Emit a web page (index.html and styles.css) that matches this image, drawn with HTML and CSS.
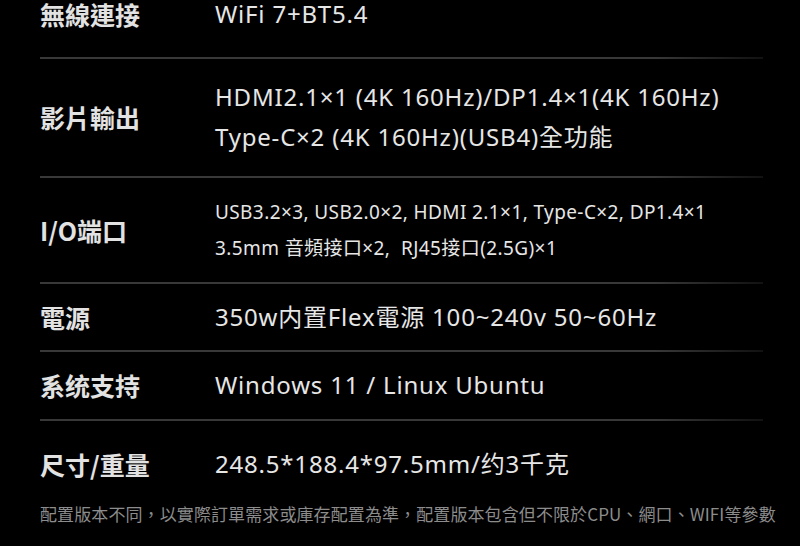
FILE: index.html
```html
<!DOCTYPE html>
<html lang="zh-Hant">
<head>
    <meta charset="UTF-8">
    <meta name="viewport" content="width=device-width, initial-scale=1.0">
    <title>規格參數</title>
    <link rel="stylesheet" href="styles.css">
</head>
<body>
    <div class="specs">
        <div class="spec-row row-wifi">
            <div class="spec-label">無線連接</div>
            <div class="spec-value">WiFi 7+BT5.4</div>
        </div>
        <div class="spec-row row-video">
            <div class="spec-label">影片輸出</div>
            <div class="spec-value multi">
                <p>HDMI2.1×1 (4K 160Hz)/DP1.4×1(4K 160Hz)</p>
                <p>Type-C×2 (4K 160Hz)(USB4)全功能</p>
            </div>
        </div>
        <div class="spec-row row-io">
            <div class="spec-label">I/O端口</div>
            <div class="spec-value small multi">
                <p>USB3.2×3, USB2.0×2, HDMI 2.1×1, Type-C×2, DP1.4×1</p>
                <p>3.5mm 音頻接口×2,&nbsp; RJ45接口(2.5G)×1</p>
            </div>
        </div>
        <div class="spec-row">
            <div class="spec-label">電源</div>
            <div class="spec-value">350w内置Flex電源 100~240v 50~60Hz</div>
        </div>
        <div class="spec-row row-os">
            <div class="spec-label">系统支持</div>
            <div class="spec-value">Windows 11 / Linux Ubuntu</div>
        </div>
        <div class="spec-row last">
            <div class="spec-label">尺寸/重量</div>
            <div class="spec-value">248.5*188.4*97.5mm/约3千克</div>
        </div>
    </div>

    <p class="note">配置版本不同，以實際訂單需求或庫存配置為準，配置版本包含但不限於CPU、網口、WIFI等參數</p>
</body>
</html>
```

FILE: styles.css
```css
body {
    margin: 0;
    padding: 0;
    background-color: #000;
    color: #e6e6e6;
    font-family: 'Noto Sans', 'Noto Sans CJK TC', sans-serif;
    overflow: hidden;
}
.specs {
    width: 723px;
    margin: 0 0 0 40px;
}
.spec-row {
    display: grid;
    grid-template-columns: 175px 1fr;
    align-items: center;
    padding: 18px 0;
    border-bottom: 2px solid;
    border-image: linear-gradient(to right, #383838 85%, #111) 1;
}
.row-wifi {
    padding: 0 0 29px;
}
.row-wifi .spec-label,
.row-wifi .spec-value {
    line-height: 28px;
}
.row-video {
    padding: 23px 0 24px;
}
.row-io {
    padding: 19px 0;
}
.row-os {
    padding: 18px 0 19px;
}
.spec-row.last {
    border-bottom: none;
    padding: 28px 0 18px;
}
.spec-label {
    font-family: 'Noto Sans CJK TC', sans-serif;
    font-weight: 700;
    font-size: 25px;
    line-height: 30px;
    color: #e2e2e2;
}
.spec-value {
    font-size: 24px;
    line-height: 30px;
    letter-spacing: 0.8px;
}
.spec-value p {
    margin: 0;
    white-space: nowrap;
}
.spec-value.multi p + p {
    margin-top: 10px;
}
.spec-value.small {
    font-size: 19px;
    line-height: 30px;
    letter-spacing: 0.4px;
}
.spec-value.small p + p {
    margin-top: 6px;
}
.note {
    margin: 6px 0 0 40px;
    font-size: 17px;
    line-height: 22px;
    letter-spacing: 0.1px;
    color: #8c8c8c;
    font-family: 'Noto Sans CJK TC', sans-serif;
    white-space: nowrap;
}
```
